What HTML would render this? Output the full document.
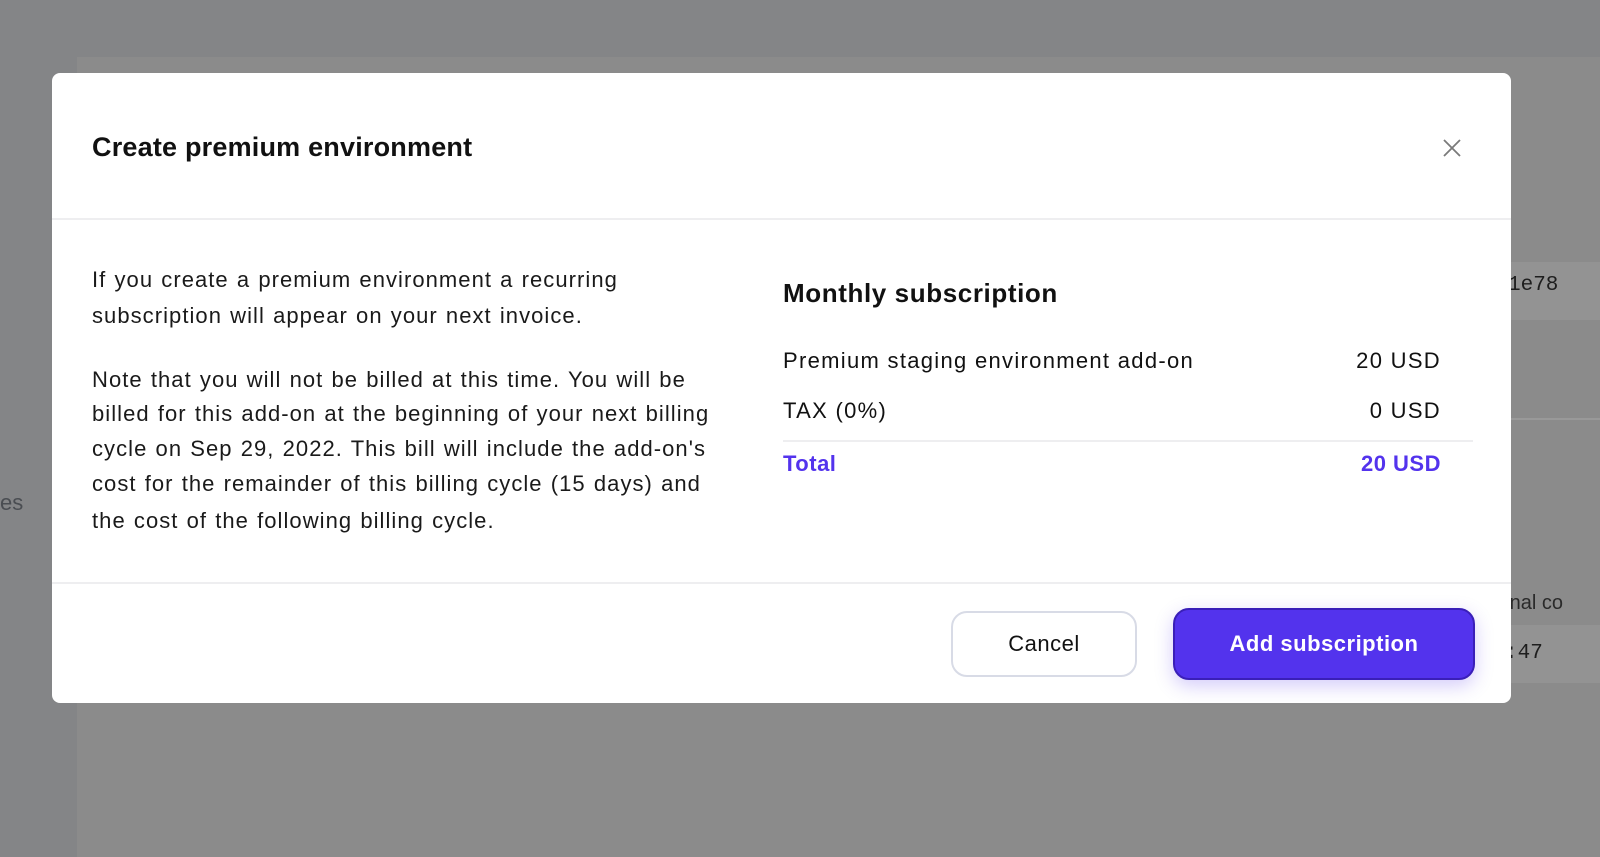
<!DOCTYPE html>
<html><head><style>
*{margin:0;padding:0;box-sizing:border-box}
body{width:1600px;height:800px;background:#848587;position:relative;overflow:hidden;font-family:"Liberation Sans",sans-serif;color:#111}
.panel{position:absolute;left:77px;top:57px;width:1600px;height:800px;background:#8b8b8b}
.strip1{position:absolute;left:1400px;top:262px;width:200px;height:58px;background:#939393}
.strip2{position:absolute;left:1400px;top:418px;width:200px;height:2px;background:#999}
.strip3{position:absolute;left:1400px;top:625px;width:200px;height:58px;background:#939393}
.mono{position:absolute;font-family:"Liberation Mono",monospace;font-size:21px;color:#1e1e1e}
.modal{position:absolute;left:52px;top:73px;width:1459px;height:630px;background:#fff;border-radius:8px}
.hdr{position:absolute;left:0;top:0;width:100%;height:147px;border-bottom:2px solid #eeeef0}
.title{position:absolute;left:40px;top:59px;font-size:27px;font-weight:bold;letter-spacing:0.2px}
.x{position:absolute;left:1390px;top:65px}
.ln{position:absolute;left:40px;font-size:22px;line-height:30px;color:#1a1a1a;white-space:nowrap;letter-spacing:1.05px;word-spacing:1px}
.right{position:absolute;left:731px;top:205px;width:690px}
.h2{font-size:26px;font-weight:bold;letter-spacing:0.6px}
.row{position:absolute;left:0;width:658px;font-size:22px;display:flex;justify-content:space-between;letter-spacing:1.3px}
.ftr{position:absolute;left:0;top:509px;width:100%;border-top:2px solid #eeeef0}
.btn{position:absolute;display:flex;align-items:center;justify-content:center;font-size:22px;border-radius:16px;letter-spacing:0.5px}
</style></head><body>
<div class="panel"></div>
<div class="strip1"></div><div class="strip2"></div><div class="strip3"></div>
<div class="mono" style="left:1508px;top:274px">1e78</div>
<div class="mono" style="left:1505px;top:642px">:47</div>
<div style="position:absolute;left:1503px;top:592px;font-size:20px;color:#2a2a2a">rnal co</div>
<div style="position:absolute;left:0;top:490px;font-size:22px;color:#4a4d52">es</div>
<div class="modal">
 <div class="hdr"></div>
 <div class="title">Create premium environment</div>
 <svg class="x" width="20" height="20" viewBox="0 0 20 20"><path d="M2 2L18 18M18 2L2 18" stroke="#7a7a7a" stroke-width="1.8"/></svg>
 <div class="ln" style="top:192px">If you create a premium environment a recurring</div>
 <div class="ln" style="top:228px">subscription will appear on your next invoice.</div>
 <div class="ln" style="top:292px">Note that you will not be billed at this time. You will be</div>
 <div class="ln" style="top:326px">billed for this add-on at the beginning of your next billing</div>
 <div class="ln" style="top:361px">cycle on Sep 29, 2022. This bill will include the add-on's</div>
 <div class="ln" style="top:396px">cost for the remainder of this billing cycle (15 days) and</div>
 <div class="ln" style="top:433px">the cost of the following billing cycle.</div>
 <div class="right">
  <div class="h2">Monthly subscription</div>
  <div class="row" style="top:70px"><span>Premium staging environment add-on</span><span>20 USD</span></div>
  <div class="row" style="top:120px"><span>TAX (0%)</span><span>0 USD</span></div>
  <div style="position:absolute;left:0;top:162px;width:690px;border-top:2px solid #eeeef0"></div>
  <div class="row" style="top:173px;color:#5333ed;font-weight:bold;letter-spacing:0.5px"><span>Total</span><span>20 USD</span></div>
 </div>
 <div class="ftr"></div>
 <div class="btn" style="left:899px;top:538px;width:186px;height:66px;border:2px solid #d8dbe6;background:#fff;color:#111">Cancel</div>
 <div class="btn" style="left:1121px;top:535px;width:302px;height:72px;border:2px solid #3a1fb8;background:#5333ed;color:#fff;font-weight:bold;box-shadow:0 6px 18px rgba(83,51,237,0.25)">Add subscription</div>
</div>
</body></html>
